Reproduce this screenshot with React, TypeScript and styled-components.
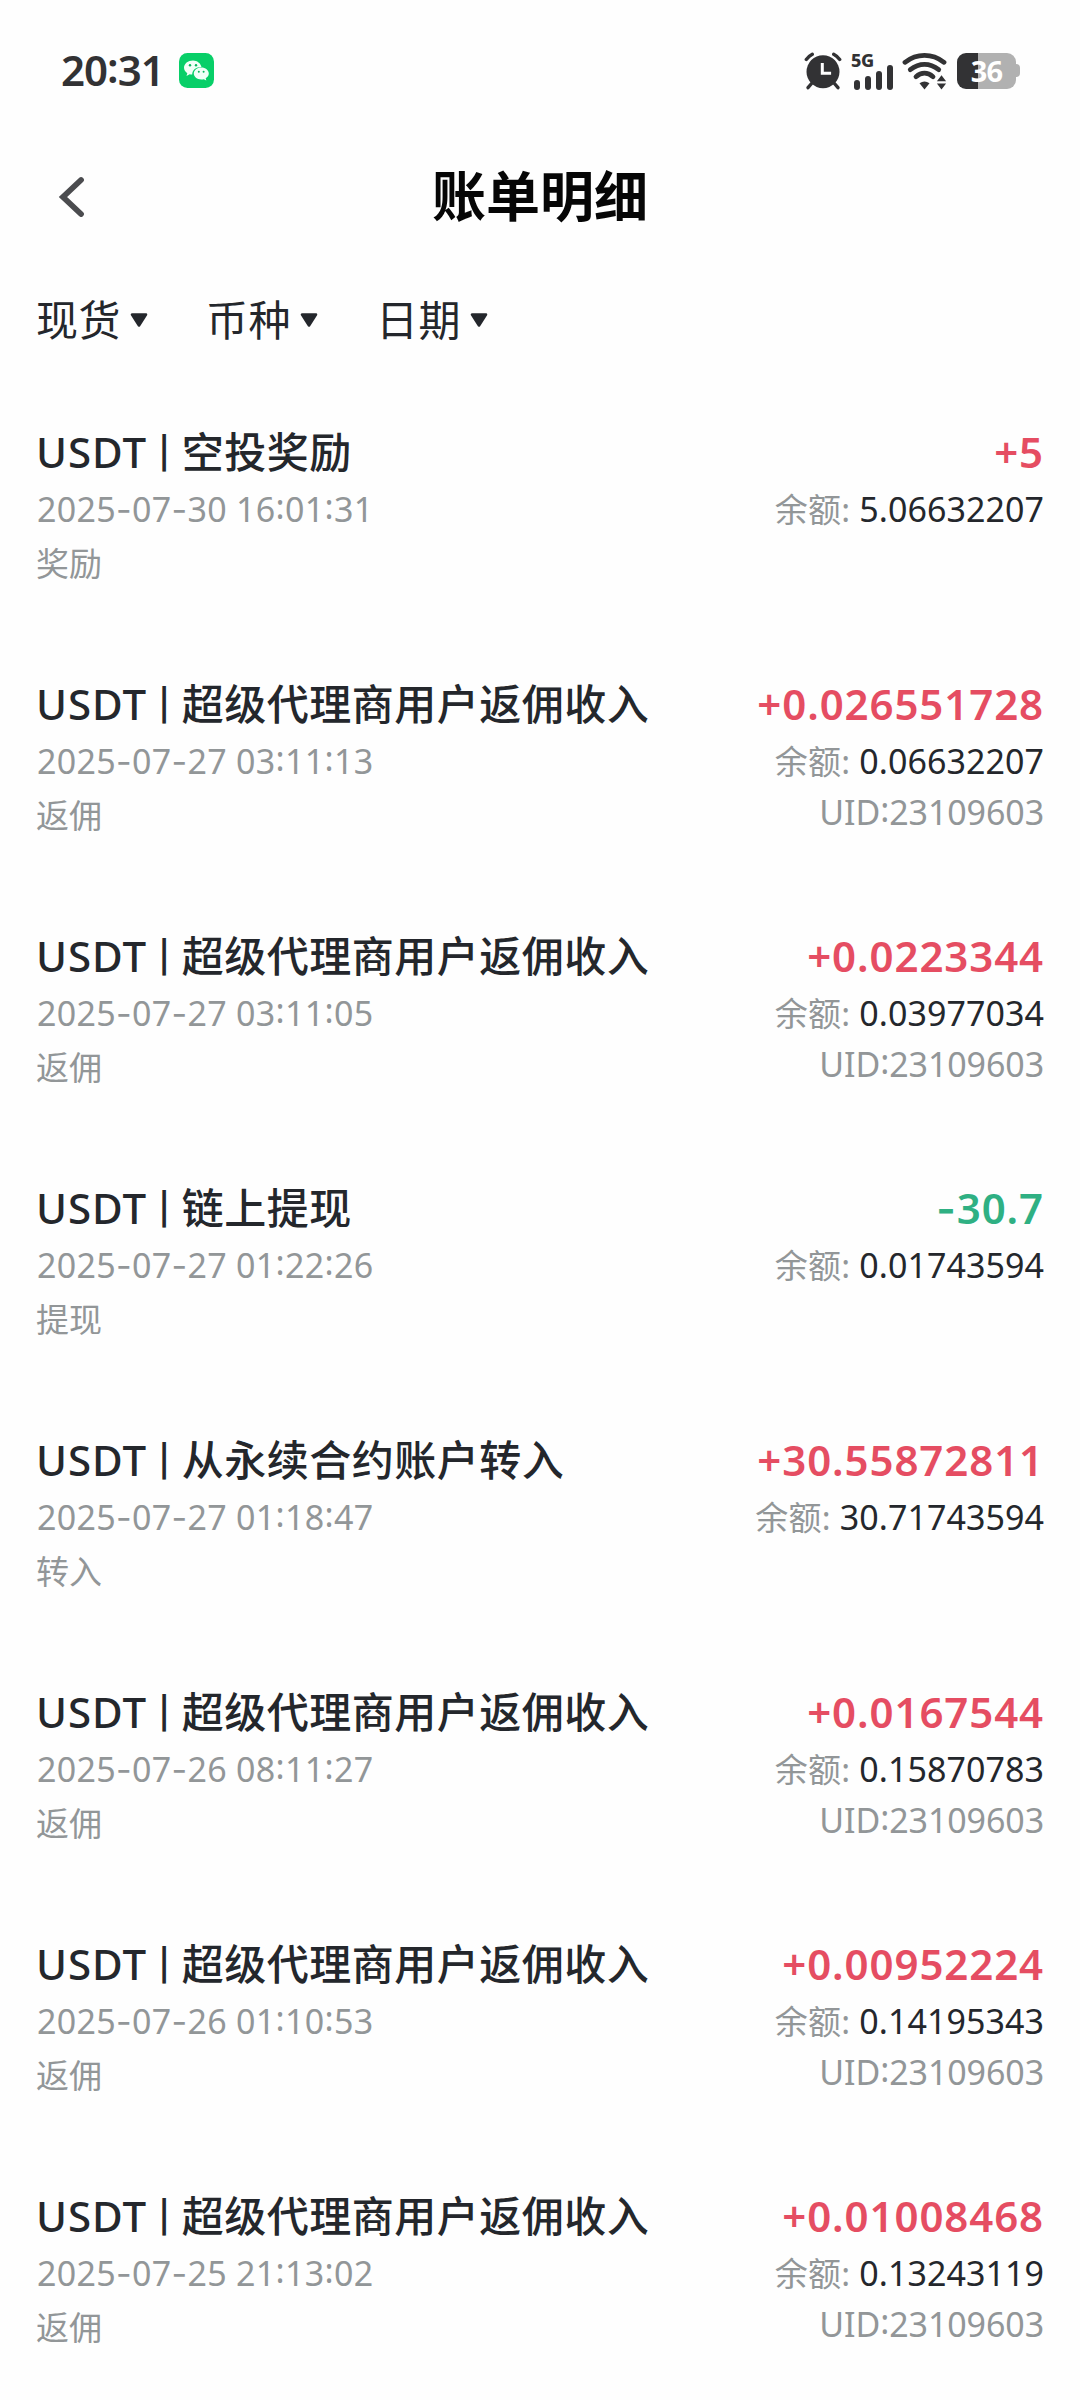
import React from "react";
import styled, { createGlobalStyle } from "styled-components";

const GlobalStyle = createGlobalStyle`
  * { box-sizing: border-box; }
  body {
    margin: 0;
    background: #fefefe;
    color: #24272c;
    font-family: "Noto Sans", "Noto Sans CJK SC", sans-serif;
  }
`;

const Screen = styled.main`
  width: 1080px;
  height: 2400px;
  overflow: hidden;
`;

const StatusBar = styled.header`
  height: 141px;
  padding: 0 60px 0 61px;
  display: flex;
  align-items: center;
  justify-content: space-between;
`;

const StatusGroup = styled.div`
  display: flex;
  align-items: center;
`;

const Clock = styled.span`
  width: 118px;
  margin-bottom: 2px;
  font-size: 42px;
  line-height: 60px;
  font-weight: 600;
  letter-spacing: -1px;
  color: #323234;
`;

const StatusIcon = styled.svg<{ $gap?: number }>`
  display: block;
  flex: none;
  margin-left: ${(p) => p.$gap ?? 0}px;
`;

const Signal = styled.div`
  width: 43px;
  height: 38px;
  padding-top: 1px;
  margin-left: 9px;
  display: flex;
  flex-direction: column;
  justify-content: space-between;
`;

const Network = styled.span`
  font-size: 18px;
  line-height: 15px;
  font-weight: 800;
  letter-spacing: -0.3px;
  color: #323234;
`;

const Bars = styled.div`
  margin: -11px 0 0 3px;
  display: flex;
  align-items: flex-end;
  gap: 5px;
`;

const Bar = styled.i<{ $h: number }>`
  width: 6px;
  height: ${(p) => p.$h}px;
  border-radius: 3px;
  background: #323234;
`;

const Battery = styled.div`
  display: flex;
  align-items: center;
  margin-left: 10px;
`;

const Cell = styled.div`
  width: 59px;
  height: 36px;
  border-radius: 9px;
  background: linear-gradient(90deg, #323234 21px, #b1b1b1 21px);
  color: #fff;
  font-size: 29px;
  line-height: 35px;
  font-weight: 700;
  letter-spacing: -0.8px;
  text-align: center;
`;

const Tip = styled.i`
  width: 4px;
  height: 13px;
  border-radius: 0 4px 4px 0;
  background: #b1b1b1;
`;

const TitleBar = styled.nav`
  height: 110px;
  padding: 0 48px;
  display: grid;
  grid-template-columns: 60px 1fr 60px;
  align-items: center;
`;

const Back = styled.button`
  width: 60px;
  height: 60px;
  padding: 0 0 0 10px;
  border: 0;
  background: none;
  display: flex;
  align-items: center;
`;

const PageTitle = styled.h1`
  margin: 0;
  text-align: center;
  font-size: 54px;
  line-height: 80px;
  font-weight: 700;
  color: #060606;
`;

const Filters = styled.div`
  height: 170px;
  padding: 39px 36px 0;
  display: flex;
  align-items: flex-start;
`;

const Filter = styled.button`
  width: 170px;
  padding: 0;
  border: 0;
  background: none;
  display: flex;
  align-items: center;
  gap: 9px;
  font: inherit;
  font-size: 42px;
  line-height: 60px;
  letter-spacing: 0.5px;
  text-align: left;
  color: #24272c;
`;

const List = styled.ul`
  margin: 0;
  padding: 0;
  list-style: none;
`;

const Row = styled.li`
  height: 252px;
  padding: 0 36px;
  display: flex;
  justify-content: space-between;
`;

const Column = styled.div<{ $end?: boolean }>`
  display: flex;
  flex-direction: column;
  align-items: ${(p) => (p.$end ? "flex-end" : "flex-start")};
  white-space: nowrap;
`;

const Heading = styled.span`
  font-size: 42px;
  line-height: 62px;
  font-weight: 500;
  letter-spacing: 0.5px;
`;

const Currency = styled.span`
  letter-spacing: 1px;
`;

const Divider = styled.span`
  font-family: Roboto, sans-serif;
  font-size: 45px;
  font-weight: 500;
  line-height: 0;
  vertical-align: 2px;
`;

const Amount = styled(Heading)<{ $gain: boolean }>`
  font-weight: 600;
  letter-spacing: 0.9px;
  color: ${(p) => (p.$gain ? "#e54d62" : "#2fb083")};
`;

const Stamp = styled.span`
  padding-left: 1px;
  font-size: 34px;
  line-height: 53px;
  letter-spacing: 0.3px;
  color: #929698;
`;

const Balance = styled(Stamp)`
  letter-spacing: 0.05px;
  color: #24272c;
`;

const Label = styled.span`
  font-size: 33px;
  letter-spacing: 0.3px;
  color: #929698;
`;

const Tag = styled.span`
  font-size: 33px;
  line-height: 56px;
  color: #929698;
`;

const Uid = styled.span`
  font-size: 34px;
  line-height: 49px;
  letter-spacing: -0.1px;
  color: #929698;
`;

const Dash = styled.span`
  font-family: Inter, sans-serif;
  line-height: 0;
`;

const Colon = styled.span`
  line-height: 0;
  vertical-align: 0.08em;
`;

function Figures({ children }: { children: string }) {
  return (
    <>
      {children.split(/([-:])/).map((part, i) =>
        part === "-" ? <Dash key={i}>-</Dash> : part === ":" ? <Colon key={i}>:</Colon> : part
      )}
    </>
  );
}

type Entry = {
  name: string;
  time: string;
  tag: string;
  amount: string;
  balance: string;
  uid?: string;
};

const entries: Entry[] = [
  { name: "空投奖励", time: "2025-07-30 16:01:31", tag: "奖励", amount: "+5", balance: "5.06632207" },
  { name: "超级代理商用户返佣收入", time: "2025-07-27 03:11:13", tag: "返佣", amount: "+0.026551728", balance: "0.06632207", uid: "23109603" },
  { name: "超级代理商用户返佣收入", time: "2025-07-27 03:11:05", tag: "返佣", amount: "+0.0223344", balance: "0.03977034", uid: "23109603" },
  { name: "链上提现", time: "2025-07-27 01:22:26", tag: "提现", amount: "-30.7", balance: "0.01743594" },
  { name: "从永续合约账户转入", time: "2025-07-27 01:18:47", tag: "转入", amount: "+30.55872811", balance: "30.71743594" },
  { name: "超级代理商用户返佣收入", time: "2025-07-26 08:11:27", tag: "返佣", amount: "+0.0167544", balance: "0.15870783", uid: "23109603" },
  { name: "超级代理商用户返佣收入", time: "2025-07-26 01:10:53", tag: "返佣", amount: "+0.00952224", balance: "0.14195343", uid: "23109603" },
  { name: "超级代理商用户返佣收入", time: "2025-07-25 21:13:02", tag: "返佣", amount: "+0.01008468", balance: "0.13243119", uid: "23109603" },
];

const WeChat = () => (
  <StatusIcon width="35" height="35" viewBox="0 0 35 35">
    <rect width="35" height="35" rx="8.5" fill="#08cf68" />
    <path d="M14 7.4c-5 0-9 3.2-9 7.2 0 2.3 1.3 4.3 3.3 5.6l-.8 2.8 3.2-1.7c.8.2 1.600.3 2.500.3 0-4.500 3.600-7.500 9.300-7.500-.8-3.900-4.300-6.700-8.500-6.700z" fill="#f2fff7" />
    <path d="M22.300 14.600c-4.200 0-7.500 2.700-7.500 6s3.300 5.900 7.500 5.900c.9 0 1.700-.1 2.500-.3l2.500 1.300-.6-2.200c1.900-1.100 3.100-2.800 3.100-4.700 0-3.300-3.300-6-7.500-6z" fill="#f2fff7" />
    <g fill="#08b75c">
      <circle cx="11" cy="12.300" r="1.200" />
      <circle cx="17" cy="12.300" r="1.200" />
      <circle cx="19.800" cy="18.800" r="1" />
      <circle cx="24.600" cy="18.800" r="1" />
    </g>
  </StatusIcon>
);

const Alarm = () => (
  <StatusIcon width="38" height="38" viewBox="0 0 38 38">
    <g stroke="#323234" strokeWidth="3.4" strokeLinecap="round" fill="none">
      <path d="M2.300 7.500Q5 4 8.300 2.300M35.700 7.500Q33 4 29.700 2.300" />
      <path d="M8 31l-4 4.600M30 31l4 4.600" />
    </g>
    <circle cx="19" cy="19.7" r="16.5" fill="#323234" />
    <path d="M18.300 11v10.300h8.800" stroke="#fff" strokeWidth="3" fill="none" />
  </StatusIcon>
);

const Wifi = () => (
  <StatusIcon $gap={8} width="45" height="38" viewBox="0 0 45 38">
    <g stroke="#323234" strokeWidth="4.8" strokeLinecap="round" fill="none">
      <path d="M3 10.300Q12 3.400 22.500 3.400T42 10.300" />
      <path d="M8.300 17.700Q15 12.400 22.500 12.400T36.700 17.700" />
      <path d="M14 24.700Q18 21.200 22.500 21.200T31 24.700" />
    </g>
    <path d="M17.500 31.300Q22.500 27.700 27.500 31.300L22.500 37.500z" fill="#323234" />
    <path d="M39.500 23.200l4.600 6h-9.200zM39.500 37.400l4.600-6h-9.200z" fill="#323234" />
  </StatusIcon>
);

const Caret = () => (
  <svg width="18" height="16" viewBox="0 0 18 16">
    <path d="M2 2.500h14L9 13.500z" fill="#24272c" stroke="#24272c" strokeWidth="2.6" strokeLinejoin="round" />
  </svg>
);

export default function App() {
  return (
    <>
      <GlobalStyle />
      <Screen>
        <StatusBar>
          <StatusGroup>
            <Clock><Figures>20:31</Figures></Clock>
            <WeChat />
          </StatusGroup>
          <StatusGroup>
            <Alarm />
            <Signal>
              <Network>5G</Network>
              <Bars>
                <Bar $h={10} />
                <Bar $h={14} />
                <Bar $h={19} />
                <Bar $h={25} />
              </Bars>
            </Signal>
            <Wifi />
            <Battery>
              <Cell>36</Cell>
              <Tip />
            </Battery>
          </StatusGroup>
        </StatusBar>

        <TitleBar>
          <Back aria-label="返回">
            <svg width="28" height="42" viewBox="0 0 28 42">
              <path d="M23 5L5 22l18 17" fill="none" stroke="#4b4c4f" strokeWidth="5.8" strokeLinecap="round" strokeLinejoin="miter" />
            </svg>
          </Back>
          <PageTitle>账单明细</PageTitle>
        </TitleBar>

        <Filters>
          {["现货", "币种", "日期"].map((name) => (
            <Filter key={name}>
              {name}
              <Caret />
            </Filter>
          ))}
        </Filters>

        <List>
          {entries.map((e, i) => (
            <Row key={i}>
              <Column>
                <Heading><Currency>USDT</Currency> <Divider>|</Divider> {e.name}</Heading>
                <Stamp><Figures>{e.time}</Figures></Stamp>
                <Tag>{e.tag}</Tag>
              </Column>
              <Column $end>
                <Amount $gain={e.amount[0] === "+"}><Figures>{e.amount}</Figures></Amount>
                <Balance><Label>余额: </Label>{e.balance}</Balance>
                {e.uid && <Uid><Figures>{`UID:${e.uid}`}</Figures></Uid>}
              </Column>
            </Row>
          ))}
        </List>
      </Screen>
    </>
  );
}
